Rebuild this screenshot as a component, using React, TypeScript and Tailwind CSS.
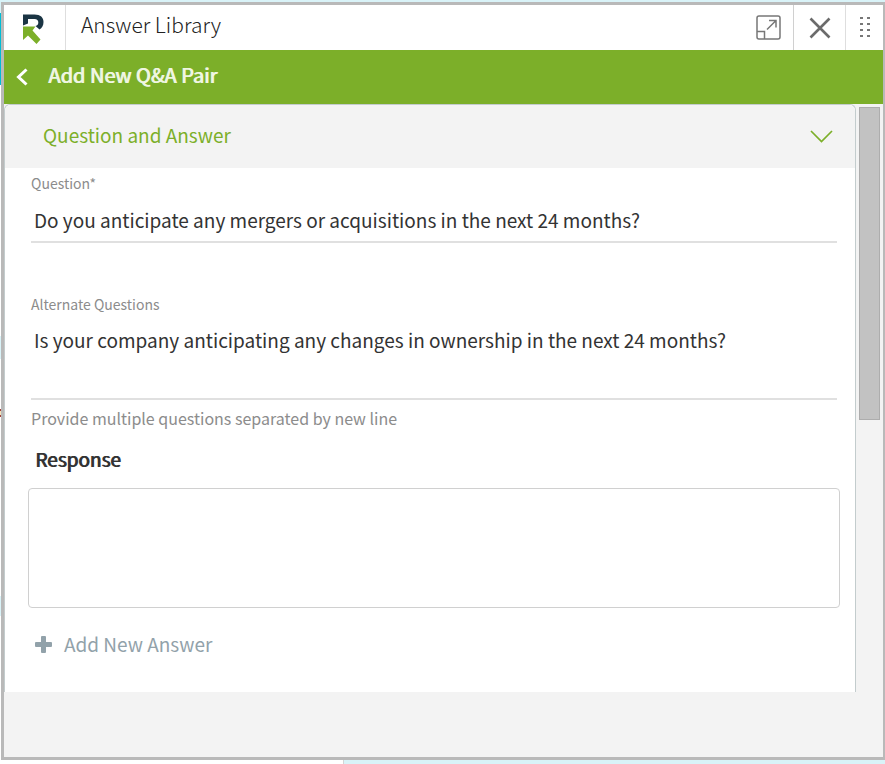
import { useState } from 'react'

function Logo() {
  return (
    <svg width="22" height="31" viewBox="0 0 22 31" aria-hidden="true">
      <path d="M1 0.500H12.500C18.500 0.500 21.500 3.500 21.500 8C21.500 11.500 20 14 17.500 15.500L13.500 12C15.500 11.500 16.300 10.300 16.300 8.500C16.300 6.300 15 5 12.500 5H6V9.500L1 11.500Z" fill="#1b3544" />
      <path d="M1 12.500H13.500L10.500 16.500L18.500 25.500L14.500 30L6 21.500L1 26Z" fill="#7caf29" />
    </svg>
  )
}

function ExpandIcon() {
  return (
    <svg width="25" height="25" viewBox="0 0 25 25" fill="none" stroke="#777" strokeWidth="1.5" aria-hidden="true">
      <rect x="1" y="1" width="23" height="23" rx="2" />
      <path d="M1 16.500H8.500V24M11 14.500L20 5.500M13 5.500H20V12.500" />
    </svg>
  )
}

function CloseIcon() {
  return (
    <svg width="22" height="22" viewBox="0 0 22 22" fill="none" stroke="#6b6b6b" strokeWidth="2.6" aria-hidden="true">
      <path d="M1.500 1.500L20.500 20.500M20.500 1.500L1.500 20.500" />
    </svg>
  )
}

function GripIcon() {
  return (
    <svg width="10" height="22" viewBox="0 0 10 22" fill="#777" aria-hidden="true">
      {[0, 6, 12, 18].map((y) => (
        <g key={y}>
          <rect x="0" y={y} width="3" height="2" />
          <rect x="7" y={y} width="3" height="2" />
        </g>
      ))}
    </svg>
  )
}

function Header() {
  return (
    <header className="flex h-[45px] bg-white">
      <div className="flex w-[62px] items-center justify-center border-r border-[#dedede] pb-px pt-1 pr-1">
        <Logo />
      </div>
      <h1 className="flex-1 pl-[15px] pt-[3px] text-[21px] leading-8 font-light text-[#222]">Answer Library</h1>
      <button type="button" aria-label="Expand" className="flex w-[50px] items-center justify-center">
        <ExpandIcon />
      </button>
      <button type="button" aria-label="Close" className="flex w-[52px] items-center justify-center border-l border-[#d0d0d0]">
        <CloseIcon />
      </button>
      <button type="button" aria-label="Move" className="flex w-[38px] items-center justify-center border-l border-[#dedede]">
        <GripIcon />
      </button>
    </header>
  )
}

export default function App() {
  const [open, setOpen] = useState(true)
  const [question, setQuestion] = useState('Do you anticipate any mergers or acquisitions in the next 24 months?')
  const [alternates, setAlternates] = useState('Is your company anticipating any changes in ownership in the next 24 months?')

  return (
    <div className="flex min-h-screen flex-col bg-white font-['Noto_Sans_CJK_SC',sans-serif]">
      <div className="h-0.5 bg-[#d9f3f8]" />

      <div className="flex flex-1">
        <div className="flex w-px flex-col">
          <div className="h-[11px] bg-[#d9f3f8]" />
          <div className="h-[72px] bg-[#00bcd4]" />
          <div className="mt-[251px] h-[23px] bg-[#d9f3f8]" />
          <div className="mt-[50px] h-2 border-y-2 border-[#a0403a] bg-[#f3e2b8]" />
          <div className="mt-[179px] h-5 bg-[#d9f3f8]" />
        </div>

        <main className="flex flex-1 flex-col border-[3px] border-r-2 border-[#b9b9b9] bg-[#f3f3f3]">
          <Header />

          <div className="flex h-[54px] items-center bg-[#7caf29] pb-1 pl-3 text-white">
            <button type="button" aria-label="Back" className="w-8 pt-1">
              <svg width="12" height="18" viewBox="0 0 12 18" fill="none" stroke="currentColor" strokeWidth="3" aria-hidden="true">
                <path d="M10.500 1.500L2.500 9L10.500 16.500" />
              </svg>
            </button>
            <h2 className="text-xl leading-8 text-[#eff6e2] [text-shadow:1px_0_0_currentColor]">Add New Q&amp;A Pair</h2>
          </div>

          <div className="flex">
            <section className="flex-1 rounded-t-md border border-b-0 border-[#c3cccd] bg-white">
              <button
                type="button"
                aria-expanded={open}
                onClick={() => setOpen(!open)}
                className="flex h-[63px] w-full items-center justify-between rounded-t-md bg-[#f3f3f3] pl-[38px] pr-[22px] text-[19px] text-[#7caf29]"
              >
                <span className="pb-0.5">Question and Answer</span>
                <svg width="23" height="13" viewBox="0 0 23 13" fill="none" stroke="currentColor" strokeWidth="1.7" aria-hidden="true">
                  <path d="M1 1L11.500 11.500L22 1" />
                </svg>
              </button>

              {open && (
                <form className="flex flex-col px-[26px] pb-8" onSubmit={(e) => e.preventDefault()}>
                  <label htmlFor="question" className="pt-[3px] text-sm leading-6 text-[#8c8c8c]">Question*</label>
                  <input
                    id="question"
                    value={question}
                    onChange={(e) => setQuestion(e.target.value)}
                    className="mr-[-8px] h-12 border-b-2 border-[#e0e0e0] px-[3px] pt-0.5 text-[19px] text-[#333] outline-none"
                  />

                  <label htmlFor="alternates" className="mt-[49px] text-sm leading-6 text-[#8c8c8c]">Alternate Questions</label>
                  <textarea
                    id="alternates"
                    value={alternates}
                    onChange={(e) => setAlternates(e.target.value)}
                    className="mr-[-8px] h-[84px] resize-none border-b-2 border-[#e0e0e0] px-[3px] pt-2 text-[19px] leading-8 text-[#333] outline-none"
                  />
                  <p className="pt-1 text-base leading-7 text-[#8c8c8c]">Provide multiple questions separated by new line</p>

                  <label htmlFor="response" className="mt-[11px] pl-1 text-[19px] leading-8 text-[#333] [text-shadow:1px_0_0_currentColor]">Response</label>
                  <textarea
                    id="response"
                    className="-ml-[3px] mr-[-11px] mt-[13px] h-[120px] resize-none rounded border border-[#d0d0d0] p-2 text-[19px] outline-none"
                  />

                  <button type="button" className="mt-5 flex items-center gap-3 self-start pl-1 text-[19px] leading-8 text-[#92a2aa]">
                    <svg width="17" height="17" viewBox="0 0 17 17" fill="currentColor" aria-hidden="true">
                      <path d="M7 0H10Q11 0 11 1V6H16Q17 6 17 7V10Q17 11 16 11H11V16Q11 17 10 17H7Q6 17 6 16V11H1Q0 11 0 10V7Q0 6 1 6H6V1Q6 0 7 0Z" />
                    </svg>
                    Add New Answer
                  </button>
                </form>
              )}
            </section>

            <div className="w-[27px] px-[3px] pt-[3px]">
              <div className="h-[313px] border border-[#adadad] bg-[#c2c2c2]" />
            </div>
          </div>
        </main>
      </div>

      <div className="flex h-1">
        <div className="w-[344px] border-r border-[#d5d5d5] bg-white" />
        <div className="flex-1 bg-[#d9f3f8]" />
      </div>
    </div>
  )
}
